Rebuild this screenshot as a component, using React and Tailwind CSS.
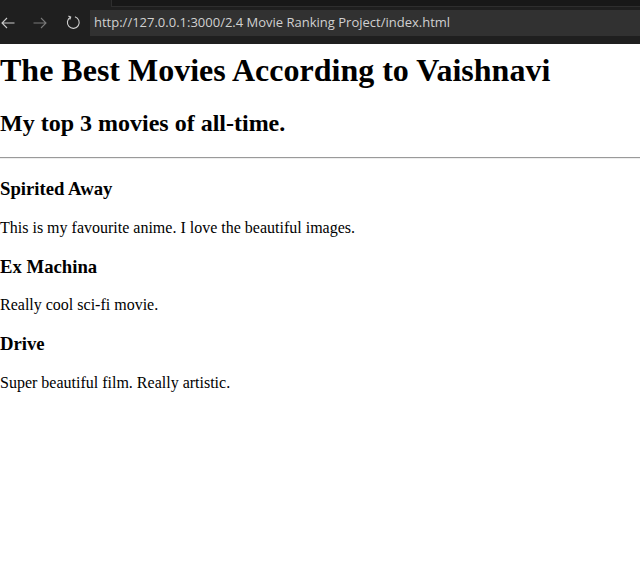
export default function App() {
  return (
    <div className="w-[640px] h-[582px] bg-white overflow-hidden">
      <div className="relative h-[44px] bg-[#1f1f1f] flex items-center">
        <div className="absolute left-[111px] right-[-2px] top-[-2px] h-[9px] bg-[#181818] border border-[#2e2e2e]" />
        <div className="flex items-center h-full pt-[1px]">
          <div className="w-[14px] ml-[1px] flex items-center justify-center">
            <svg width="14" height="12" viewBox="0 0 14 12" fill="none" stroke="#cccccc" strokeWidth="1.1">
              <path d="M13.5 6H1M6 1L1 6l5 5" />
            </svg>
          </div>
          <div className="w-[14px] ml-[18px] flex items-center justify-center">
            <svg width="14" height="12" viewBox="0 0 14 12" fill="none" stroke="#7a7a7a" strokeWidth="1.1">
              <path d="M0.5 6H13M8 1l5 5-5 5" />
            </svg>
          </div>
          <div className="w-[15px] ml-[19px] flex items-center justify-center">
            <svg width="15" height="15" viewBox="0 0 16 16" fill="none" stroke="#cccccc" strokeWidth="1.2">
              <path d="M5 2.3A6.3 6.3 0 1 0 9.5 1.9" />
              <path d="M2.6 1.2L5 2.3 4 4.8" />
            </svg>
          </div>
          <div className="ml-[9px] w-[550px] h-[26px] bg-[#313131] flex items-center pl-[4px] font-['Open_Sans',sans-serif] text-[13px] text-[#d0d0d0] leading-none">
            http://127.0.0.1:3000/2.4 Movie Ranking Project/index.html
          </div>
        </div>
      </div>
      <div className="font-['Liberation_Serif',serif] text-black leading-[normal] pt-[8px]">
        <h1 className="text-[32px] font-bold leading-[normal] mb-[21.44px]">
          The Best Movies According to Vaishnavi
        </h1>
        <h2 className="text-[24px] font-bold leading-[normal] mb-[19.92px]">
          My top 3 movies of all-time.
        </h2>
        <hr className="border-0 border-t border-t-[#9a9a9a] border-b border-b-[#eeeeee] h-[2px] mb-[18.72px]" />
        <h3 className="text-[18.72px] font-bold leading-[normal] mb-[18.72px]">Spirited Away</h3>
        <p className="text-[16px] leading-[normal] mb-[18.72px]">
          This is my favourite anime. I love the beautiful images.
        </p>
        <h3 className="text-[18.72px] font-bold leading-[normal] mb-[18.72px]">Ex Machina</h3>
        <p className="text-[16px] leading-[normal] mb-[18.72px]">Really cool sci-fi movie.</p>
        <h3 className="text-[18.72px] font-bold leading-[normal] mb-[18.72px]">Drive</h3>
        <p className="text-[16px] leading-[normal]">Super beautiful film. Really artistic.</p>
      </div>
    </div>
  );
}
